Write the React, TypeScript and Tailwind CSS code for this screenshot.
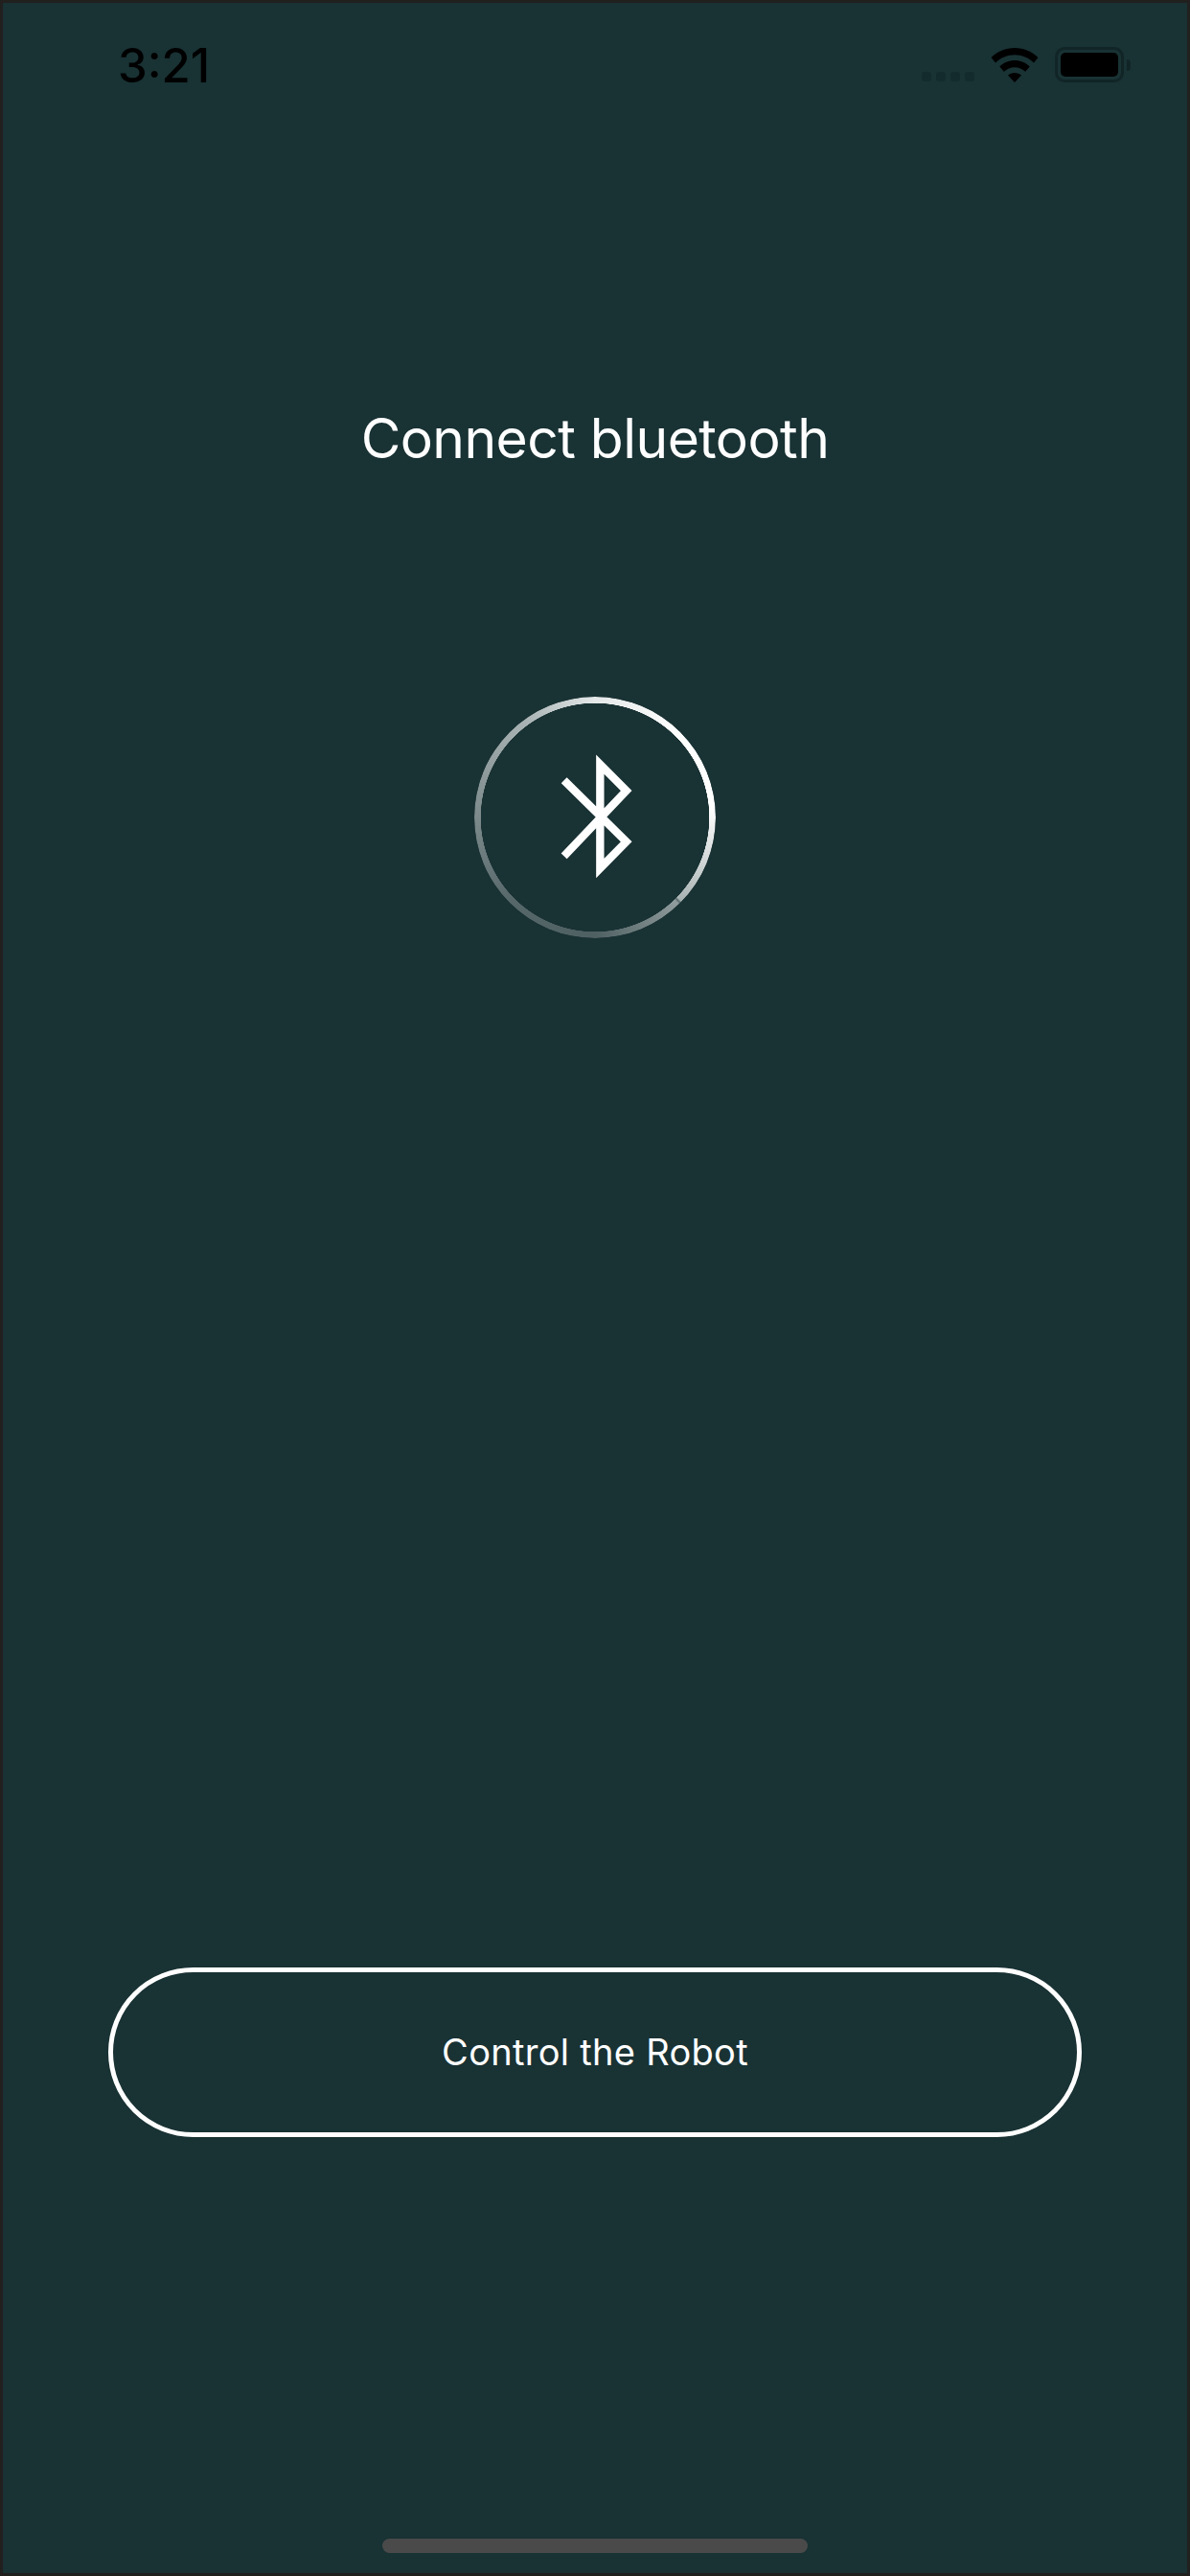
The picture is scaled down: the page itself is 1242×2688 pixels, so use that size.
const fontStack = "font-['Inter','Liberation_Sans',sans-serif]";

function Wifi() {
  return (
    <svg width="50" height="36" viewBox="0 0 50 36" fill="#000">
      <path d="M25 0C15.500 0 7 3.700 0.500 10L5 15.500C10.300 10.200 17.300 7.200 25 7.200C32.700 7.200 39.700 10.200 45 15.500L49.500 10C43 3.700 34.500 0 25 0Z" />
      <path d="M25 13C19 13 13.500 15.300 9.300 19.500L13.800 24.800C16.800 21.900 20.700 20.200 25 20.200C29.300 20.200 33.200 21.900 36.200 24.800L40.700 19.500C36.500 15.300 31 13 25 13Z" />
      <path d="M25 26C22.300 26 19.900 27 18 28.600L25 36L32 28.600C30.100 27 27.700 26 25 26Z" />
    </svg>
  );
}

function Battery() {
  return (
    <div className="flex items-center">
      <div className="w-[72px] h-[37px] rounded-[10px] border-[3px] border-[#112527] p-[3px]">
        <div className="w-full h-full rounded-[5px] bg-black" />
      </div>
      <div className="ml-[3px] w-[4px] h-[12px] rounded-r-[4px] bg-[#112527]" />
    </div>
  );
}

function StatusBar() {
  return (
    <div className="flex items-start justify-between pt-[40px] pl-[123px] pr-[62px] h-[100px]">
      <span className="text-[49px] leading-[58px] font-medium text-black">3:21</span>
      <div className="flex items-start pt-[10px]">
        <div className="flex gap-[5px] mt-[25px] mr-[17px]">
          <span className="w-[10px] h-[10px] rounded-[3px] bg-[#132b2d]" />
          <span className="w-[10px] h-[10px] rounded-[3px] bg-[#132b2d]" />
          <span className="w-[10px] h-[10px] rounded-[3px] bg-[#132b2d]" />
          <span className="w-[10px] h-[10px] rounded-[3px] bg-[#132b2d]" />
        </div>
        <Wifi />
        <div className="ml-[17px] -mt-[1px]">
          <Battery />
        </div>
      </div>
    </div>
  );
}

function BluetoothIcon() {
  return (
    <svg width="80" height="134" viewBox="340 255 240 402" fill="none">
      <path
        d="M357 577L552 372L470 290V615L552 532L357 340"
        stroke="#fff"
        strokeWidth="25"
        strokeMiterlimit="10"
      />
    </svg>
  );
}

function ScanRing() {
  return (
    <div className="relative w-[252px] h-[252px] flex items-center justify-center">
      <div className="absolute inset-0 rounded-full bg-[conic-gradient(from_0deg,#e4e8e8_0deg,#ffffff_45deg,#ffffff_85deg,#d8dcdc_108deg,#a9b3b3_134deg,#5d6e70_135deg,#8f9b9c_136deg,#4f6062_180deg,#56676a_225deg,#7c8a8b_270deg,#aab4b5_325deg,#e4e8e8_360deg)] [mask:radial-gradient(circle,transparent_119px,black_119.500px)]" />
      <div className="ml-[3px]">
        <BluetoothIcon />
      </div>
    </div>
  );
}

export default function App() {
  return (
    <div className={`${fontStack} w-[1242px] h-[2688px] flex flex-col bg-[#193234] border-[3px] border-[#221f1f] text-white`}>
      <div className="-mx-[3px] -mt-[3px]">
        <StatusBar />
      </div>
      <h1 className="mt-[323px] text-center text-[57px] leading-[70px] font-normal tracking-[-0.55px]">Connect bluetooth</h1>
      <div className="mt-[234px] flex justify-center">
        <ScanRing />
      </div>
      <div className="flex-1" />
      <div className="px-[110px]">
        <button className="w-full h-[177px] rounded-full border-[5px] border-white text-[38px] tracking-[0.3px]">
          Control the Robot
        </button>
      </div>
      <div className="mt-[419px] mb-[21px] mx-auto w-[444px] h-[15px] rounded-[8px] bg-[#4a4a4a]" />
    </div>
  );
}
